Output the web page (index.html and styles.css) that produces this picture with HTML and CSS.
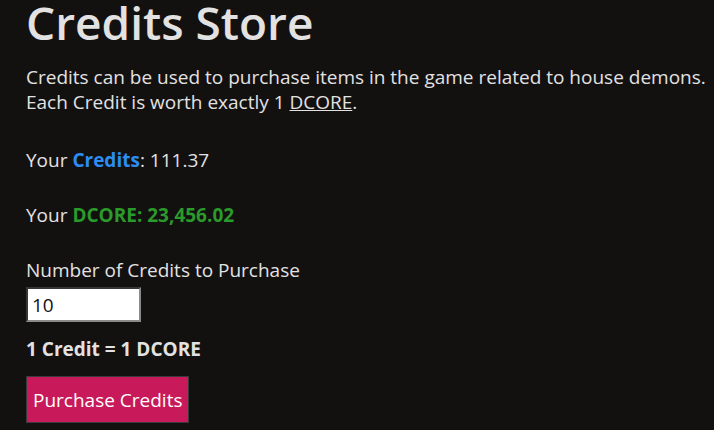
FILE: index.html
```html
<!DOCTYPE html>
<html lang="en">
<head>
<meta charset="UTF-8">
<title>Credits Store</title>
<link rel="stylesheet" href="styles.css">
</head>
<body>
<div class="store">
    <h1 class="title">Credits Store</h1>
    <p class="intro">Credits can be used to purchase items in the game related to house demons.<br>Each Credit is worth exactly 1 <a href="#" class="link">DCORE</a>.</p>
    <p class="balance first">Your <b class="blue">Credits</b>: 111.37</p>
    <p class="balance">Your <b class="green">DCORE: 23,456.02</b></p>
    <label class="label" for="amount">Number of Credits to Purchase</label>
    <input class="amount" id="amount" type="text" value="10">
    <p class="rate">1 Credit = 1 DCORE</p>
    <button class="buy">Purchase Credits</button>
</div>
</body>
</html>
```

FILE: styles.css
```css
html, body{margin:0; padding:0; background:#131010;}
body{font-family:"Open Sans", "Noto Sans", sans-serif; color:#e2e2e2; font-size:19px;}
.store{padding:0 0 0 26px;}
.title{font-size:46px; font-weight:600; margin:0; line-height:44px; white-space:nowrap;}
.intro{margin:21px 0 0 0; line-height:25px; white-space:nowrap;}
.link{color:#e2e2e2; text-decoration:underline;}
.balance{margin:30px 0 0 0; line-height:25px;}
.balance.first{margin-top:33px;}
.blue{color:#2c8df2;}
.green{color:#2a9a2a;}
.label{display:block; margin-top:30px; line-height:25px;}
.amount{display:block; box-sizing:border-box; width:115px; height:35px; margin-top:4px; font:inherit; color:#111; padding:0 4px; border:2px inset #8a8a8a; background:#fff;}
.rate{font-weight:bold; margin:15px 0 0 0; line-height:25px;}
.buy{display:block; margin-top:14px; height:47px; padding:0 6px; background:#c81a5a; color:#fff; border:1px solid #3a3a3a; font:inherit;}
```
